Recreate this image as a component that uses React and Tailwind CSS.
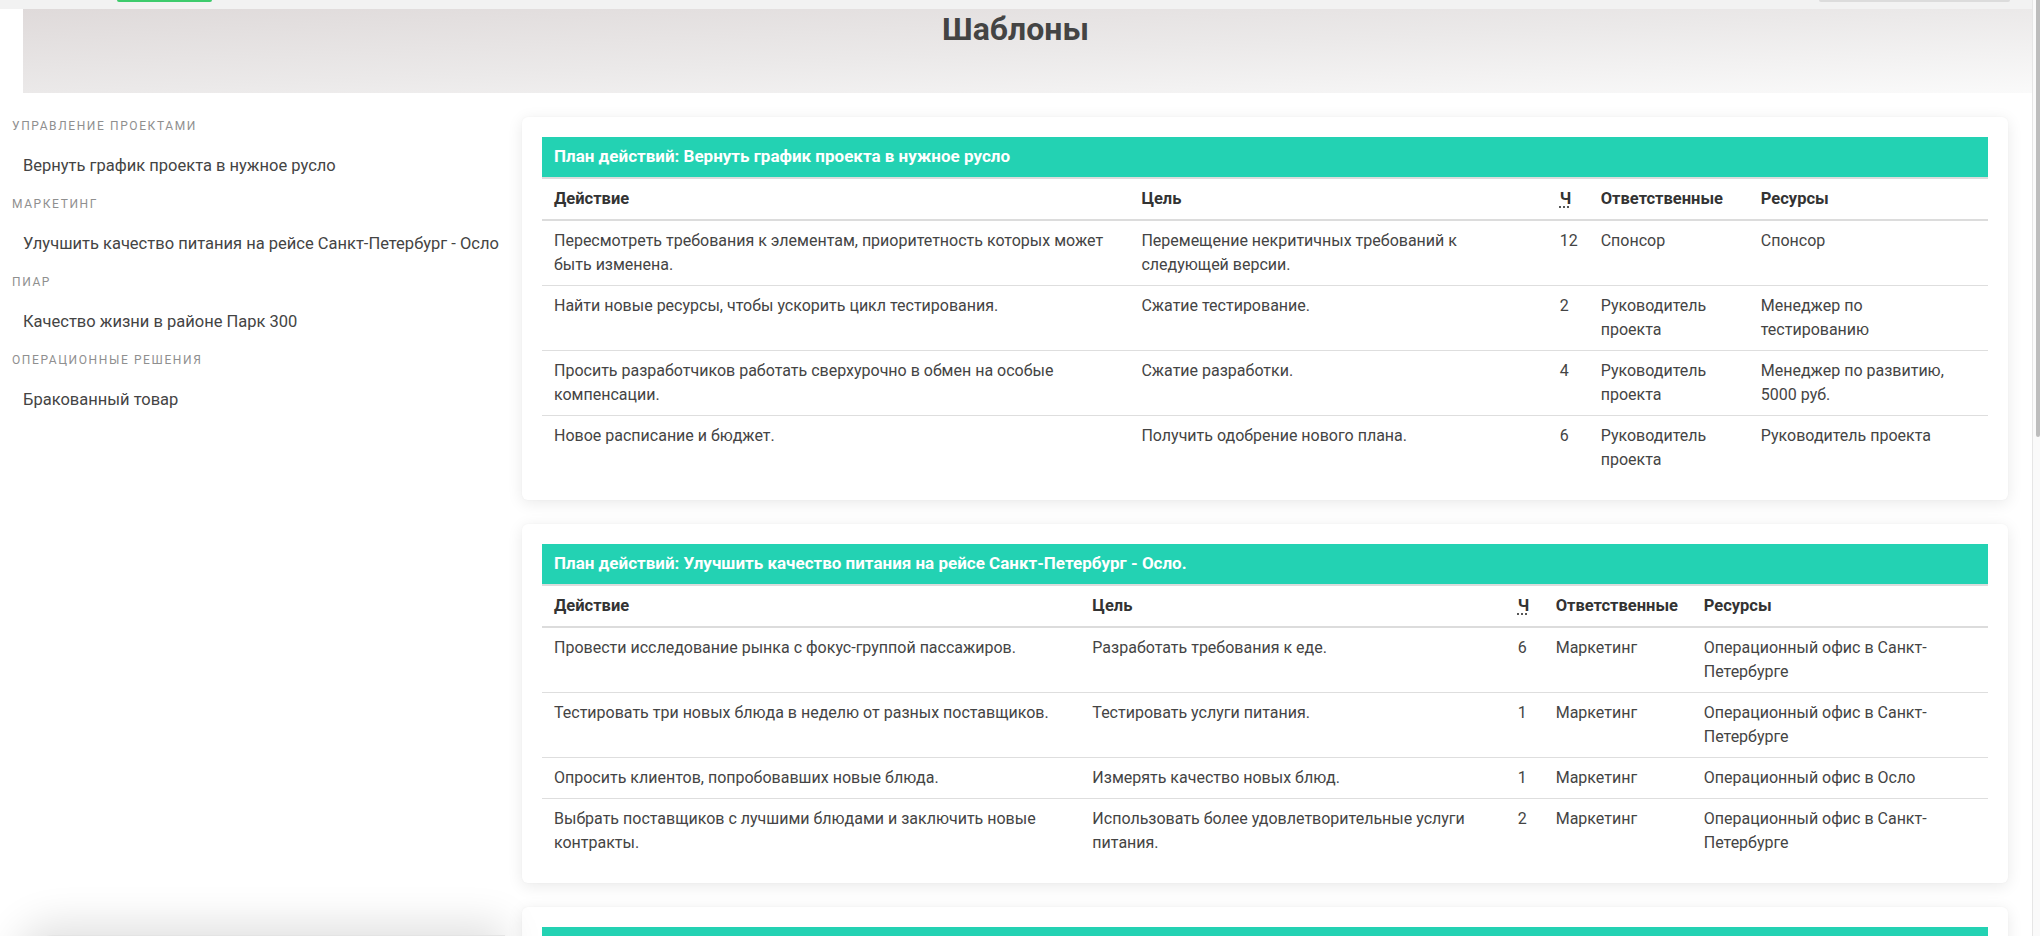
import React from 'react';

const categories = [
  { name: 'Управление проектами', items: ['Вернуть график проекта в нужное русло'] },
  { name: 'Маркетинг', items: ['Улучшить качество питания на рейсе Санкт-Петербург - Осло'] },
  { name: 'Пиар', items: ['Качество жизни в районе Парк 300'] },
  { name: 'Операционные решения', items: ['Бракованный товар'] },
];

const plans = [
  {
    title: 'План действий: Вернуть график проекта в нужное русло',
    cols: ['w-[587px]', 'w-[418px]', 'w-[41px]', 'w-[160px]', 'w-[239px]'],
    rows: [
      ['Пересмотреть требования к элементам, приоритетность которых может быть изменена.', 'Перемещение некритичных требований к следующей версии.', '12', 'Спонсор', 'Спонсор'],
      ['Найти новые ресурсы, чтобы ускорить цикл тестирования.', 'Сжатие тестирование.', '2', 'Руководитель проекта', 'Менеджер по тестированию'],
      ['Просить разработчиков работать сверхурочно в обмен на особые компенсации.', 'Сжатие разработки.', '4', 'Руководитель проекта', 'Менеджер по развитию, 5000 руб.'],
      ['Новое расписание и бюджет.', 'Получить одобрение нового плана.', '6', 'Руководитель проекта', 'Руководитель проекта'],
    ],
  },
  {
    title: 'План действий: Улучшить качество питания на рейсе Санкт-Петербург - Осло.',
    cols: ['w-[538px]', 'w-[425px]', 'w-[38px]', 'w-[148px]', 'w-[296px]'],
    rows: [
      ['Провести исследование рынка с фокус-группой пассажиров.', 'Разработать требования к еде.', '6', 'Маркетинг', 'Операционный офис в Санкт-Петербурге'],
      ['Тестировать три новых блюда в неделю от разных поставщиков.', 'Тестировать услуги питания.', '1', 'Маркетинг', 'Операционный офис в Санкт-Петербурге'],
      ['Опросить клиентов, попробовавших новые блюда.', 'Измерять качество новых блюд.', '1', 'Маркетинг', 'Операционный офис в Осло'],
      ['Выбрать поставщиков с лучшими блюдами и заключить новые контракты.', 'Использовать более удовлетворительные услуги питания.', '2', 'Маркетинг', 'Операционный офис в Санкт-Петербурге'],
    ],
  },
  {
    title: 'План действий: Качество жизни в районе Парк 300',
    cols: ['w-[560px]', 'w-[420px]', 'w-[40px]', 'w-[160px]', 'w-[265px]'],
    rows: [
      ['Провести опрос жителей района.', 'Определить основные проблемы.', '8', 'Пиар', 'Пиар-отдел'],
      ['Организовать встречу с администрацией.', 'Согласовать план улучшений.', '4', 'Пиар', 'Руководитель проекта'],
    ],
  },
];

function PlanCard({ plan }) {
  return (
    <div className="bg-white rounded-[6px] p-[20px] mb-[24px] shadow-[0_3px_16px_rgba(0,0,0,0.09),0_0_2px_rgba(0,0,0,0.04)]">
      <div className="h-[40px] bg-[#23d2b3] text-white font-bold text-[17px] flex items-center px-[12px] border-b-2 border-[#dcdcdc] box-content">
        {plan.title}
      </div>
      <table className="w-full table-fixed border-collapse text-[16px] text-[#444]">
        <colgroup>
          {plan.cols.map((c, i) => (
            <col key={i} className={c} />
          ))}
        </colgroup>
        <thead>
          <tr className="border-b-2 border-[#dcdcdc] text-[16.5px]">
            <th className="text-left font-bold text-[#333] px-[12px] py-[8px] leading-[24px]">Действие</th>
            <th className="text-left font-bold text-[#333] px-[12px] py-[8px] leading-[24px]">Цель</th>
            <th className="text-left font-bold text-[#333] px-[12px] py-[8px] leading-[24px]">
              <abbr title="Часы" className="underline decoration-dotted underline-offset-[3px]">Ч</abbr>
            </th>
            <th className="text-left font-bold text-[#333] px-[12px] py-[8px] leading-[24px]">Ответственные</th>
            <th className="text-left font-bold text-[#333] px-[12px] py-[8px] leading-[24px]">Ресурсы</th>
          </tr>
        </thead>
        <tbody>
          {plan.rows.map((r, i) => (
            <tr key={i} className={i < plan.rows.length - 1 ? 'border-b border-[#dedede]' : ''}>
              {r.map((cell, j) => (
                <td key={j} className={`align-top px-[12px] py-[8px] leading-[24px] ${j === 4 ? 'pr-[30px]' : ''}`}>
                  {cell}
                </td>
              ))}
            </tr>
          ))}
        </tbody>
      </table>
    </div>
  );
}

export default function App() {
  return (
    <div className="relative w-[2040px] h-[936px] overflow-hidden bg-white flex font-['Roboto','Liberation_Sans',sans-serif]">
      <div className="w-[2032px] flex flex-col">
        <div className="h-[9px] bg-[#f2f2f2] flex items-start shrink-0">
          <div className="ml-[117px] w-[95px] h-[2px] bg-[#3dcb6c] rounded-b-[2px]" />
          <div className="ml-auto mr-[22px] w-[191px] h-[2px] bg-[#dcdcdc] rounded-b-[3px]" />
        </div>
        <div className="ml-[23px] h-[84px] shrink-0 bg-gradient-to-br from-[#dfdada] via-[#ebe9e9] to-[#fafafa] flex justify-center pr-[24px]">
          <h1 className="text-[32px] leading-none font-bold text-[#444] pt-[4px]">Шаблоны</h1>
        </div>
        <div className="flex flex-1">
          <aside className="w-[522px] shrink-0 pt-[23px]">
            {categories.map((cat) => (
              <div key={cat.name} className="mb-[8px]">
                <div className="h-[20px] leading-[20px] pl-[12px] text-[12px] uppercase tracking-[1.6px] text-[#8f8f8f]">
                  {cat.name}
                </div>
                {cat.items.map((it) => (
                  <div key={it} className="mt-[10px] h-[40px] leading-[40px] pl-[23px] text-[16.5px] text-[#444]">
                    {it}
                  </div>
                ))}
              </div>
            ))}
          </aside>
          <main className="flex-1 pt-[24px] pr-[24px]">
            {plans.map((p) => (
              <PlanCard key={p.title} plan={p} />
            ))}
          </main>
        </div>
      </div>
      <div className="w-[8px] border-l border-[#e6e6e6] bg-[#fafafa] flex justify-end">
        <div className="w-[4px] h-[437px] bg-[#bdbdbd] rounded-b-[3px]" />
      </div>
      <div className="absolute left-[15px] top-[935px] w-[490px] h-[80px] bg-white border-t border-[#e4e4e4] rounded-tl-[40px] shadow-[0_-12px_40px_rgba(0,0,0,0.12)]" />
    </div>
  );
}
